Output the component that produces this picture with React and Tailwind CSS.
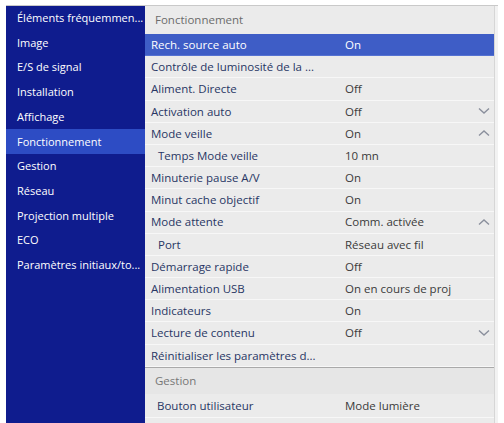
import React from "react";

const sideItems = [
  "Éléments fréquemmen...",
  "Image",
  "E/S de signal",
  "Installation",
  "Affichage",
  "Fonctionnement",
  "Gestion",
  "Réseau",
  "Projection multiple",
  "ECO",
  "Paramètres initiaux/to...",
];

const rows = [
  { label: "Rech. source auto", value: "On", active: true },
  { label: "Contrôle de luminosité de la ..." },
  { label: "Aliment. Directe", value: "Off" },
  { label: "Activation auto", value: "Off", chevron: "down" },
  { label: "Mode veille", value: "On", chevron: "up" },
  { label: "Temps Mode veille", value: "10 mn", sub: true },
  { label: "Minuterie pause A/V", value: "On" },
  { label: "Minut cache objectif", value: "On" },
  { label: "Mode attente", value: "Comm. activée", chevron: "up" },
  { label: "Port", value: "Réseau avec fil", sub: true },
  { label: "Démarrage rapide", value: "Off" },
  { label: "Alimentation USB", value: "On en cours de proj" },
  { label: "Indicateurs", value: "On" },
  { label: "Lecture de contenu", value: "Off", chevron: "down" },
  { label: "Réinitialiser les paramètres d..." },
];

function Chevron({ dir }) {
  return (
    <svg width="12" height="8" viewBox="0 0 12 8" className="text-[#8a8f9c]">
      {dir === "down" ? (
        <path d="M1 1.5 L6 6 L11 1.5" fill="none" stroke="currentColor" strokeWidth="1.4" />
      ) : (
        <path d="M1 6.5 L6 2 L11 6.5" fill="none" stroke="currentColor" strokeWidth="1.4" />
      )}
    </svg>
  );
}

function Row({ label, value, active, chevron, sub }) {
  return (
    <div
      className={
        "flex h-[22.2px] items-center border-b " +
        (active
          ? "bg-[#3e5dc6] text-white border-[#5572d2]"
          : "text-[#283664] border-[#f7f7f7]")
      }
    >
      <div className={"w-[200px] truncate " + (sub ? "pl-[13px]" : "pl-[6px]")}>{label}</div>
      <div className={"flex-1 " + (active ? "text-white" : "text-[#3a3a3a]")}>{value}</div>
      <div className="flex w-[20px] justify-center">{chevron && <Chevron dir={chevron} />}</div>
    </div>
  );
}

export default function App() {
  return (
    <div
      className="h-[423px] w-[504px] overflow-hidden bg-white pl-[6px] pt-[5px] text-[11px]"
      style={{ fontFamily: '"Open Sans", "Noto Sans", sans-serif' }}
    >
      <div className="flex h-[430px] w-[492px] border-t border-[#c9c9c9]">
        <div className="w-[139px] bg-[#0f1c8e] text-white">
          {sideItems.map((s, i) => (
            <div
              key={s}
              className={
                "flex h-[24.7px] items-center truncate pl-[11px] " +
                (i === 5 ? "bg-[#2d4cc4]" : "")
              }
            >
              {s}
            </div>
          ))}
        </div>
        <div className="flex flex-1 text-[11.5px]">
          <div className="flex-1 bg-[#ebebeb]">
            <div className="flex h-[28px] items-center pl-[10px] text-[#6b6b6b]">Fonctionnement</div>
            {rows.map((r) => (
              <Row key={r.label} {...r} />
            ))}
            <div className="border-t border-[#a9a9a9] bg-[#e6e6e6]">
              <div className="flex h-[26px] items-center pl-[10px] text-[#777]">Gestion</div>
              <div className="flex h-[24px] items-center border-b border-[#f7f7f7] bg-[#ebebeb] text-[#283664]">
                <div className="w-[200px] pl-[12px]">Bouton utilisateur</div>
                <div className="flex-1 text-[#3a3a3a]">Mode lumière</div>
              </div>
            </div>
          </div>
          <div className="w-[4px] border-l border-[#d6d6d6] bg-[#f2f2f2]" />
        </div>
      </div>
    </div>
  );
}
